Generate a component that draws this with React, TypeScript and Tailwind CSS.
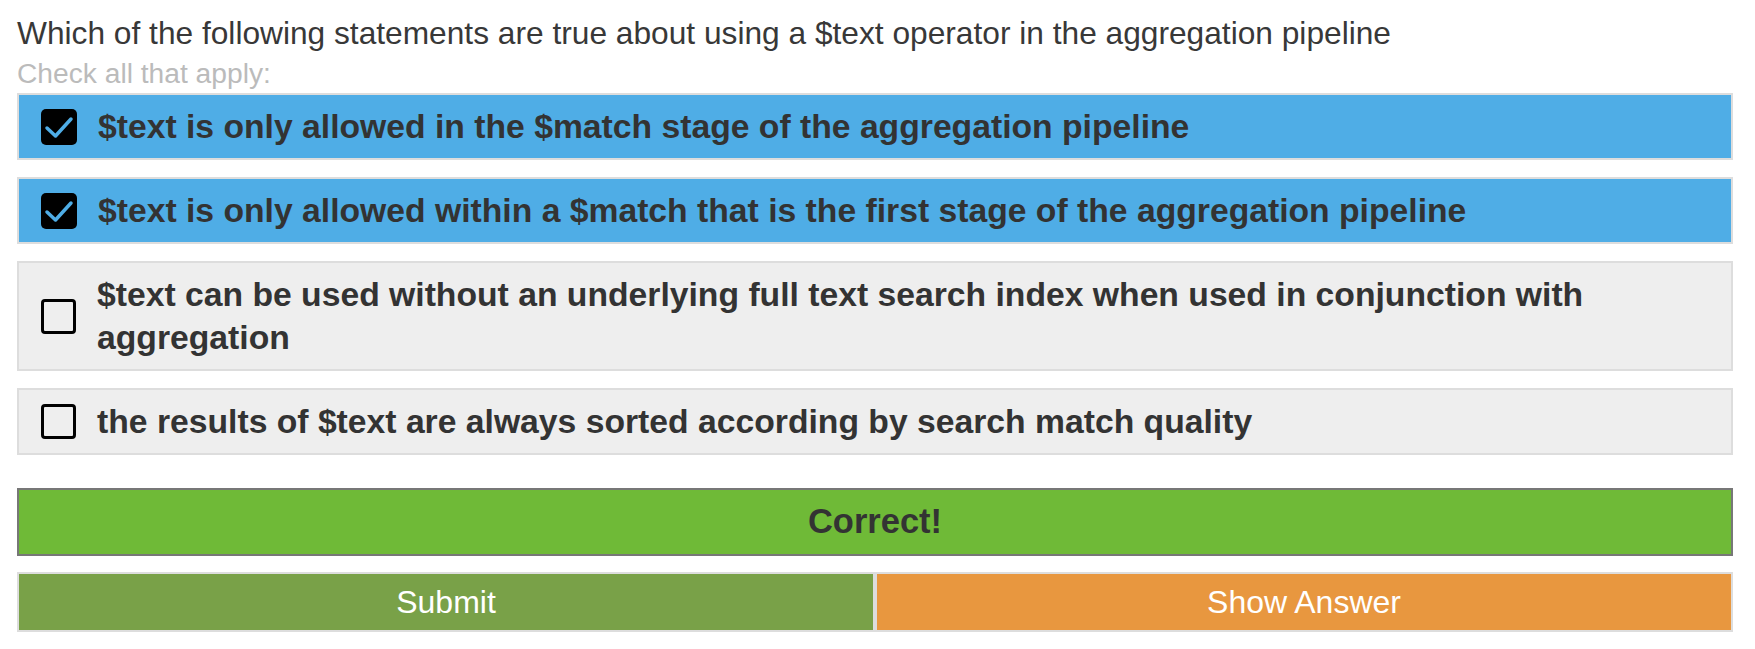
import React, { useState } from 'react';

const options = [
  { id: 1, text: '$text is only allowed in the $match stage of the aggregation pipeline', checked: true },
  { id: 2, text: '$text is only allowed within a $match that is the first stage of the aggregation pipeline', checked: true },
  { id: 3, text: '$text can be used without an underlying full text search index when used in conjunction with aggregation', checked: false },
  { id: 4, text: 'the results of $text are always sorted according by search match quality', checked: false },
];

function CheckBox({ checked }: { checked: boolean }) {
  if (checked) {
    return (
      <div className="w-[36px] h-[36px] shrink-0 rounded-[5px] bg-black">
        <svg viewBox="0 0 36 36" className="w-[36px] h-[36px]">
          <path d="M6 19 L14.5 27 L30 10" fill="none" stroke="#4fade6" strokeWidth="3.5" strokeLinecap="round" strokeLinejoin="round" />
        </svg>
      </div>
    );
  }
  return <div className="w-[35px] h-[35px] shrink-0 rounded-[4px] border-[3.5px] border-black" />;
}

export default function App() {
  const [selected, setSelected] = useState<Record<number, boolean>>(
    Object.fromEntries(options.map(o => [o.id, o.checked]))
  );

  return (
    <main className="w-[1755px] h-[649px] bg-white font-['Liberation_Sans',Arial,sans-serif]">
      <div className="ml-[17px] w-[1716px] pt-[13px]">
        <h1 className="text-[31.7px] leading-[40px] text-[#383838] font-normal">
          Which of the following statements are true about using a $text operator in the aggregation pipeline
        </h1>
        <p className="text-[28.2px] leading-[39px] pt-[1px] text-[#bbb]">Check all that apply:</p>

        <div className="flex flex-col gap-[17px]">
          {options.map(option => {
            const on = selected[option.id];
            return (
              <label
                key={option.id}
                onClick={() => setSelected(s => ({ ...s, [option.id]: !s[option.id] }))}
                className={`flex items-center border-2 border-[#ddd] py-[10px] pl-[22px] pr-[16px] cursor-pointer ${
                  on ? 'bg-[#4fade6]' : 'bg-[#eee]'
                }`}
              >
                <CheckBox checked={on} />
                <span className="ml-[21px] text-[33.7px] leading-[43px] font-bold text-[#333]">{option.text}</span>
              </label>
            );
          })}
        </div>

        <div className="mt-[33px] h-[68px] border-2 border-[#777] bg-[#6fba37] flex items-center justify-center">
          <span className="text-[34.5px] font-bold text-[#333]">Correct!</span>
        </div>

        <div className="mt-[16px] grid grid-cols-2">
          <button className="h-[60px] border-2 border-[#ddd] bg-[#79a148] text-white text-[32px]">Submit</button>
          <button className="h-[60px] border-2 border-[#ddd] bg-[#e8973f] text-white text-[32px]">Show Answer</button>
        </div>
      </div>
    </main>
  );
}
